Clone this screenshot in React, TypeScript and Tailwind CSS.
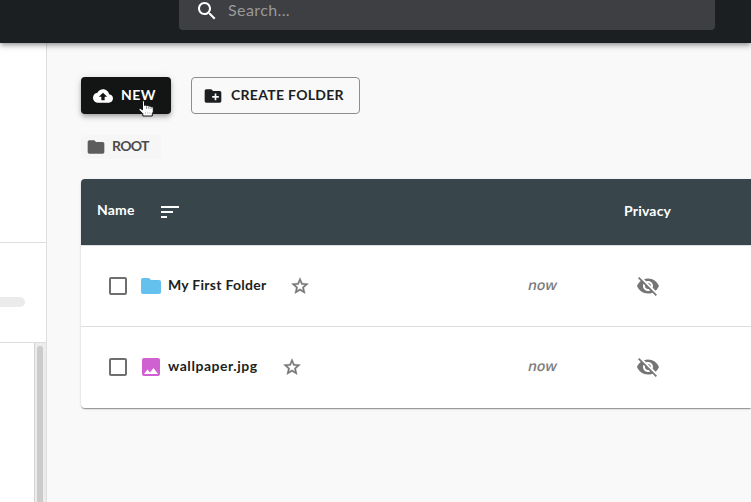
import React from "react";

const paths = {
  search:
    "M15.5 14h-.79l-.28-.27C15.41 12.59 16 11.11 16 9.5 16 5.91 13.09 3 9.5 3S3 5.91 3 9.5 5.91 16 9.5 16c1.61 0 3.09-.59 4.23-1.57l.27.28v.79l5 4.99L20.49 19l-4.99-5zm-6 0C7.01 14 5 11.99 5 9.5S7.01 5 9.5 5 14 7.01 14 9.5 11.99 14 9.5 14z",
  cloud:
    "M19.35 10.04C18.67 6.59 15.64 4 12 4 9.11 4 6.6 5.64 5.35 8.04 2.34 8.36 0 10.91 0 14c0 3.31 2.69 6 6 6h13c2.76 0 5-2.24 5-5 0-2.64-2.05-4.78-4.65-4.96zM14 13v4h-4v-4H7l5-5 5 5h-3z",
  createFolder:
    "M20 6h-8l-2-2H4c-1.11 0-1.99.89-1.99 2L2 18c0 1.11.89 2 2 2h16c1.11 0 2-.89 2-2V8c0-1.11-.89-2-2-2zm-1 8h-3v3h-2v-3h-3v-2h3V9h2v3h3v2z",
  folder:
    "M10 4H4c-1.1 0-1.99.9-1.99 2L2 18c0 1.1.9 2 2 2h16c1.1 0 2-.9 2-2V8c0-1.1-.9-2-2-2h-8l-2-2z",
  sort: "M3 18h6v-2H3v2zM3 6v2h18V6H3zm0 7h12v-2H3v2z",
  checkbox:
    "M19 5v14H5V5h14m0-2H5c-1.1 0-2 .9-2 2v14c0 1.1.9 2 2 2h14c1.1 0 2-.9 2-2V5c0-1.1-.9-2-2-2z",
  star: "M22 9.24l-7.19-.62L12 2 9.19 8.63 2 9.24l5.46 4.73L5.82 21 12 17.27 18.18 21l-1.63-7.03L22 9.24zM12 15.4l-3.76 2.27 1-4.28-3.32-2.88 4.38-.38L12 6.1l1.71 4.04 4.38.38-3.32 2.88 1 4.28L12 15.4z",
  image:
    "M19 3H5c-1.1 0-2 .9-2 2v14c0 1.1.9 2 2 2h14c1.1 0 2-.9 2-2V5c0-1.1-.9-2-2-2zM5 19l3.5-4.5 2.5 3.01L14.5 13l4.5 6H5z",
  hidden:
    "M12 7c2.76 0 5 2.24 5 5 0 .65-.13 1.26-.36 1.83l2.92 2.92c1.51-1.26 2.7-2.89 3.43-4.75-1.73-4.39-6-7.5-11-7.5-1.4 0-2.74.25-3.98.7l2.16 2.16C10.74 7.13 11.35 7 12 7zM2 4.27l2.28 2.28.46.46C3.08 8.3 1.78 10.02 1 12c1.73 4.39 6 7.5 11 7.5 1.55 0 3.03-.3 4.38-.84l.42.42L19.73 22 21 20.73 3.27 3 2 4.27zM7.53 9.8l1.55 1.55c-.05.21-.08.43-.08.65 0 1.66 1.34 3 3 3 .22 0 .44-.03.65-.08l1.55 1.55c-.67.33-1.41.53-2.2.53-2.76 0-5-2.24-5-5 0-.79.2-1.53.53-2.2zm4.31-.78l3.15 3.15.02-.16c0-1.66-1.34-3-3-3l-.17.01z",
};

function Icon({ name, className }: { name: keyof typeof paths; className: string }) {
  return (
    <svg viewBox="0 0 24 24" fill="currentColor" className={`shrink-0 ${className}`}>
      <path d={paths[name]} />
    </svg>
  );
}

function HandCursor() {
  return (
    <svg viewBox="0 0 17 17" className="absolute left-[57px] top-[23px] size-[17px]">
      <path
        d="M4.5 1.8c0-1.4 2-1.4 2 0v3.7c.4-.7 2-.6 2.2.4.5-.7 2-.5 2.2.4.6-.6 2-.2 2.2.7.7-.5 2.2 0 2.2.9V12l-1 1.5V16H4.8v-2.3L1.2 10c-.7-1 .5-2 1.5-1.3l1.8 1.1z"
        fill="#fff"
        stroke="#111"
        strokeWidth="1"
      />
      <path d="M8.6 6.4v2.4M10.8 6.8v2M13 7.4v1.6" stroke="#555" strokeWidth=".7" />
      <path d="M7.5 12v2M9.7 12v2M11.9 12v2" stroke="#aaa" strokeWidth=".6" />
    </svg>
  );
}

type RowProps = {
  icon: "folder" | "image";
  iconClass: string;
  name: string;
  nameClass: string;
};

function FileRow({ icon, iconClass, name, nameClass }: RowProps) {
  return (
    <div className="flex h-[80px] items-center pl-[25px]">
      <Icon name="checkbox" className="size-6 text-[#6f6f6f]" />
      <Icon name={icon} className={`ml-[9px] size-6 ${iconClass}`} />
      <span className={`ml-[5px] whitespace-nowrap pb-0.5 text-sm font-bold text-[#1c1f22] ${nameClass}`}>{name}</span>
      <Icon name="star" className="size-5 stroke-current stroke-[0.5] text-[#757575]" />
      <span className="ml-auto w-[108px] -skew-x-12 pb-0.5 font-['Open_Sans',sans-serif] text-sm font-semibold text-[#7b7b7b]">now</span>
      <Icon name="hidden" className="mr-[91px] size-6 text-[#757575]" />
    </div>
  );
}

export default function App() {
  return (
    <div className="flex h-[502px] w-[751px] flex-col overflow-hidden bg-[#f9f9f9] font-[Lato,'Open_Sans',sans-serif]">
      <header className="relative z-10 h-[43px] shrink-0 bg-[#1c1f22] pl-[179px] shadow-[0_2px_4px_-1px_rgba(0,0,0,0.3),0_4px_5px_rgba(0,0,0,0.12),0_1px_10px_rgba(0,0,0,0.1)]">
        <div className="flex h-[30px] w-[536px] items-start rounded-b bg-[#3e3f42] pl-4">
          <Icon name="search" className="-mt-px size-6 text-white" />
          <span className="ml-[9px] text-base leading-5 tracking-[0.4px] text-[#98999b]">Search...</span>
        </div>
      </header>

      <div className="flex min-h-0 flex-1">
        <aside className="flex w-[47px] shrink-0 flex-col border-r border-[#dedede] bg-white">
          <div className="h-[200px] shrink-0 border-b border-[#dedede]" />
          <div className="h-[100px] shrink-0 border-b border-[#dedede] pt-[54px]">
            <div className="h-[10px] w-[25px] rounded-r-full bg-[#ebebeb]" />
          </div>
          <div className="ml-auto flex w-3 flex-1 border-l border-[#d2d2d2] bg-[#ececea] pl-0.5 pt-[3px]">
            <div className="w-1.5 rounded-t-full bg-[#cacbca]" />
          </div>
        </aside>

        <main className="min-w-0 flex-1 pl-[34px] pt-[34px]">
          <div className="flex gap-5">
            <button className="relative flex h-[37px] w-[90px] items-center rounded bg-[#131414] pl-3 text-sm font-bold text-white shadow-[0_2px_4px_-1px_rgba(0,0,0,0.25),0_4px_5px_rgba(0,0,0,0.12),0_1px_10px_rgba(0,0,0,0.1)]">
              <Icon name="cloud" className="size-5" />
              <span className="ml-2 pb-0.5 tracking-[0.4px]">NEW</span>
              <HandCursor />
            </button>
            <button className="flex h-[37px] w-[169px] items-center rounded border border-[#8c8d8e] pl-[11px] text-sm font-bold text-[#1c1f22]">
              <Icon name="createFolder" className="size-5" />
              <span className="ml-2 whitespace-nowrap pb-0.5 tracking-[0.3px]">CREATE FOLDER</span>
            </button>
          </div>

          <div className="mt-[21px] flex h-6 w-20 items-center rounded bg-[#f6f6f6] pl-[5px] text-sm font-bold text-[#4b4b4b]">
            <Icon name="folder" className="size-5 text-[#5d5d5d]" />
            <span className="ml-[6px] pb-0.5 tracking-[-0.7px]">ROOT</span>
          </div>

          <section className="mt-5 h-[229px] rounded-l bg-white shadow-[0_2px_1px_-1px_rgba(0,0,0,0.2),0_1px_1px_rgba(0,0,0,0.2),0_1px_3px_rgba(0,0,0,0.12)]">
            <div className="flex h-[66px] items-center rounded-tl bg-[#38454b] pl-4 text-sm font-bold tracking-[0.2px] text-white">
              <span className="w-[61px] pb-1">Name</span>
              <Icon name="sort" className="size-6" />
              <span className="ml-auto w-[127px] pb-0.5">Privacy</span>
            </div>
            <div className="h-[82px] border-y border-[#dedede]">
              <FileRow icon="folder" iconClass="text-[#64c1ed]" name="My First Folder" nameClass="w-[122px] tracking-[0.27px]" />
            </div>
            <div className="h-[81px]">
              <FileRow icon="image" iconClass="text-[#cf61d0]" name="wallpaper.jpg" nameClass="w-[114px] tracking-[0.55px]" />
            </div>
          </section>
        </main>
      </div>
    </div>
  );
}
